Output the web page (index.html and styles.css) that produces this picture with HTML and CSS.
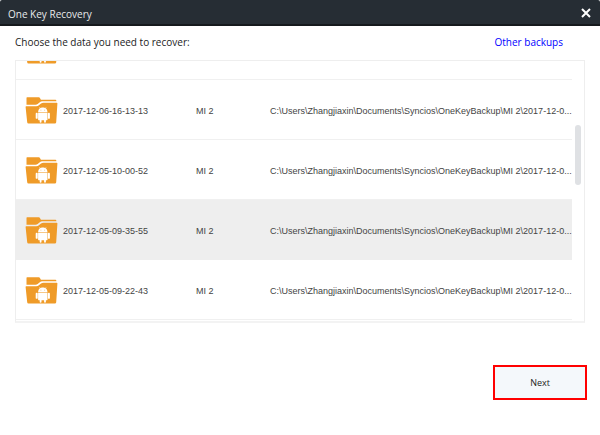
FILE: index.html
```html
<!DOCTYPE html>
<html lang="en">
<head>
<meta charset="utf-8">
<title>One Key Recovery</title>
<link rel="stylesheet" href="styles.css">
</head>
<body>
<svg class="sprite" aria-hidden="true">
  <symbol id="folder" viewBox="0 0 32 27">
    <path fill="#ef9b28" d="M1 .8Q1 .2 1.6.2H13.4Q14 .2 14.3.8L15.4 2.7H30Q30.8 2.7 30.8 3.5V4.2H17Q15.3 4.2 14 5.4L12.2 6.9Q11.3 7.7 10 7.7H1Z"/>
    <path fill="#ef9b28" d="M.7 9.2H10.6Q12.4 9.2 13.7 8L15.5 6.6Q16.6 5.7 18 5.7H31.2Q32 5.7 31.9 6.5L30.7 25.2Q30.6 26.4 29.4 26.4H3Q1.8 26.4 1.7 25.2L.1 10Q0 9.2.7 9.2Z"/>
    <g fill="#fff">
      <path d="M12.6 15.3C12.8 11.6 15 10.6 17.3 10.6S21.8 11.6 22 15.3Z"/>
      <path d="M12.6 15.8H22V22.6Q22 23.2 21.4 23.2H20.4V25Q20.4 25.8 19.5 25.8T18.6 25V23.2H16V25Q16 25.8 15.1 25.8T14.2 25V23.2H13.2Q12.6 23.2 12.6 22.6Z"/>
      <rect x="10.2" y="15.8" width="2" height="6" rx=".9"/>
      <rect x="22.4" y="15.8" width="2" height="6" rx=".9"/>
    </g>
    <path d="M14.6 11.4L14 10.2M20 11.4L20.6 10.2" stroke="#fff" stroke-width=".5"/>
    <path d="M15 13.2h.8M18.8 13.2h.8" stroke="#ef9b28" stroke-width=".6"/>
  </symbol>
</svg>
<header class="titlebar">
  <h1 class="title">One Key Recovery</h1>
  <button class="close" type="button" aria-label="Close">
    <svg width="10" height="10" viewBox="0 0 10 10"><path d="M1 1L9 9M9 1L1 9" stroke="#fff" stroke-width="2"/></svg>
  </button>
</header>
<main class="content">
  <div class="toolbar">
    <h2 class="prompt">Choose the data you need to recover:</h2>
    <a class="other" href="#other">Other backups</a>
  </div>
  <div class="list">
    <div class="viewport">
      <table class="backups">
        <tr><td class="icon"><svg class="folder"><use href="#folder"/></svg></td><td class="date"></td><td class="device"></td><td class="path"></td></tr>
        <tr><td class="icon"><svg class="folder"><use href="#folder"/></svg></td><td class="date">2017-12-06-16-13-13</td><td class="device">MI 2</td><td class="path">C:\Users\Zhangjiaxin\Documents\Syncios\OneKeyBackup\MI 2\2017-12-0...</td></tr>
        <tr><td class="icon"><svg class="folder"><use href="#folder"/></svg></td><td class="date">2017-12-05-10-00-52</td><td class="device">MI 2</td><td class="path">C:\Users\Zhangjiaxin\Documents\Syncios\OneKeyBackup\MI 2\2017-12-0...</td></tr>
        <tr class="selected"><td class="icon"><svg class="folder"><use href="#folder"/></svg></td><td class="date">2017-12-05-09-35-55</td><td class="device">MI 2</td><td class="path">C:\Users\Zhangjiaxin\Documents\Syncios\OneKeyBackup\MI 2\2017-12-0...</td></tr>
        <tr><td class="icon"><svg class="folder"><use href="#folder"/></svg></td><td class="date">2017-12-05-09-22-43</td><td class="device">MI 2</td><td class="path">C:\Users\Zhangjiaxin\Documents\Syncios\OneKeyBackup\MI 2\2017-12-0...</td></tr>
      </table>
    </div>
    <div class="scrollbar"><div class="thumb"></div></div>
  </div>
  <div class="actions"><button class="next" type="button">Next</button></div>
</main>
</body>
</html>
```
FILE: styles.css
```css
* { box-sizing: border-box; }
body {
  margin: 0;
  background: #fff;
  color: #222;
  font-family: "Open Sans", "Noto Sans", sans-serif;
  font-size: 10px;
}
.sprite { position: absolute; width: 0; height: 0; }
.titlebar {
  display: flex;
  align-items: center;
  justify-content: space-between;
  height: 26px;
  padding: 1px 9px 0 8px;
  background: #262d34;
  border-bottom: 2px solid #15191d;
  border-radius: 2px 2px 0 0;
}
.title { margin: 0; padding-top: 2px; font-size: 10px; font-weight: 400; color: #e8eaec; }
.close { display: flex; padding: 0; border: 0; background: none; }
.content { padding: 0 15px; }
.toolbar {
  display: flex;
  align-items: center;
  justify-content: space-between;
  height: 34px;
  padding: 0 22px 3px 0;
}
.prompt { margin: 0; font-size: 10px; font-weight: 400; }
.other { color: #00f; text-decoration: none; }
.list {
  display: flex;
  justify-content: space-between;
  height: 263px;
  border: 1px solid #eee;
  border-bottom: 2px solid #f3f3f3;
}
.viewport {
  display: flex;
  flex: 1;
  align-items: flex-end;
  min-width: 0;
  padding-bottom: 1px;
  overflow: hidden;
}
.backups { width: 100%; table-layout: fixed; border-collapse: separate; border-spacing: 0; }
td {
  height: 60px;
  padding: 2px 0 0;
  border-bottom: 1px solid #f0f0f0;
  color: #444;
  font-family: "Liberation Sans", Arial, sans-serif;
  font-size: 9px;
  line-height: 12px;
  white-space: nowrap;
}
.selected td { background: #eee; border-color: #eee; }
.icon { width: 47px; padding-left: 9px; }
.date { width: 133px; }
.device { width: 74px; }
.folder { display: block; width: 33px; height: 27px; }
.scrollbar { width: 12px; padding: 64px 3px 0; }
.thumb { height: 60px; border-radius: 3px; background: #dfe1e4; }
.actions { display: flex; justify-content: flex-end; margin-right: -2px; padding-top: 42px; }
.next {
  width: 94px;
  height: 35px;
  padding: 0;
  border: 2px solid #f00;
  background: #f4f8fb;
  color: #222;
  font-family: inherit;
  font-size: 9px;
}
```
